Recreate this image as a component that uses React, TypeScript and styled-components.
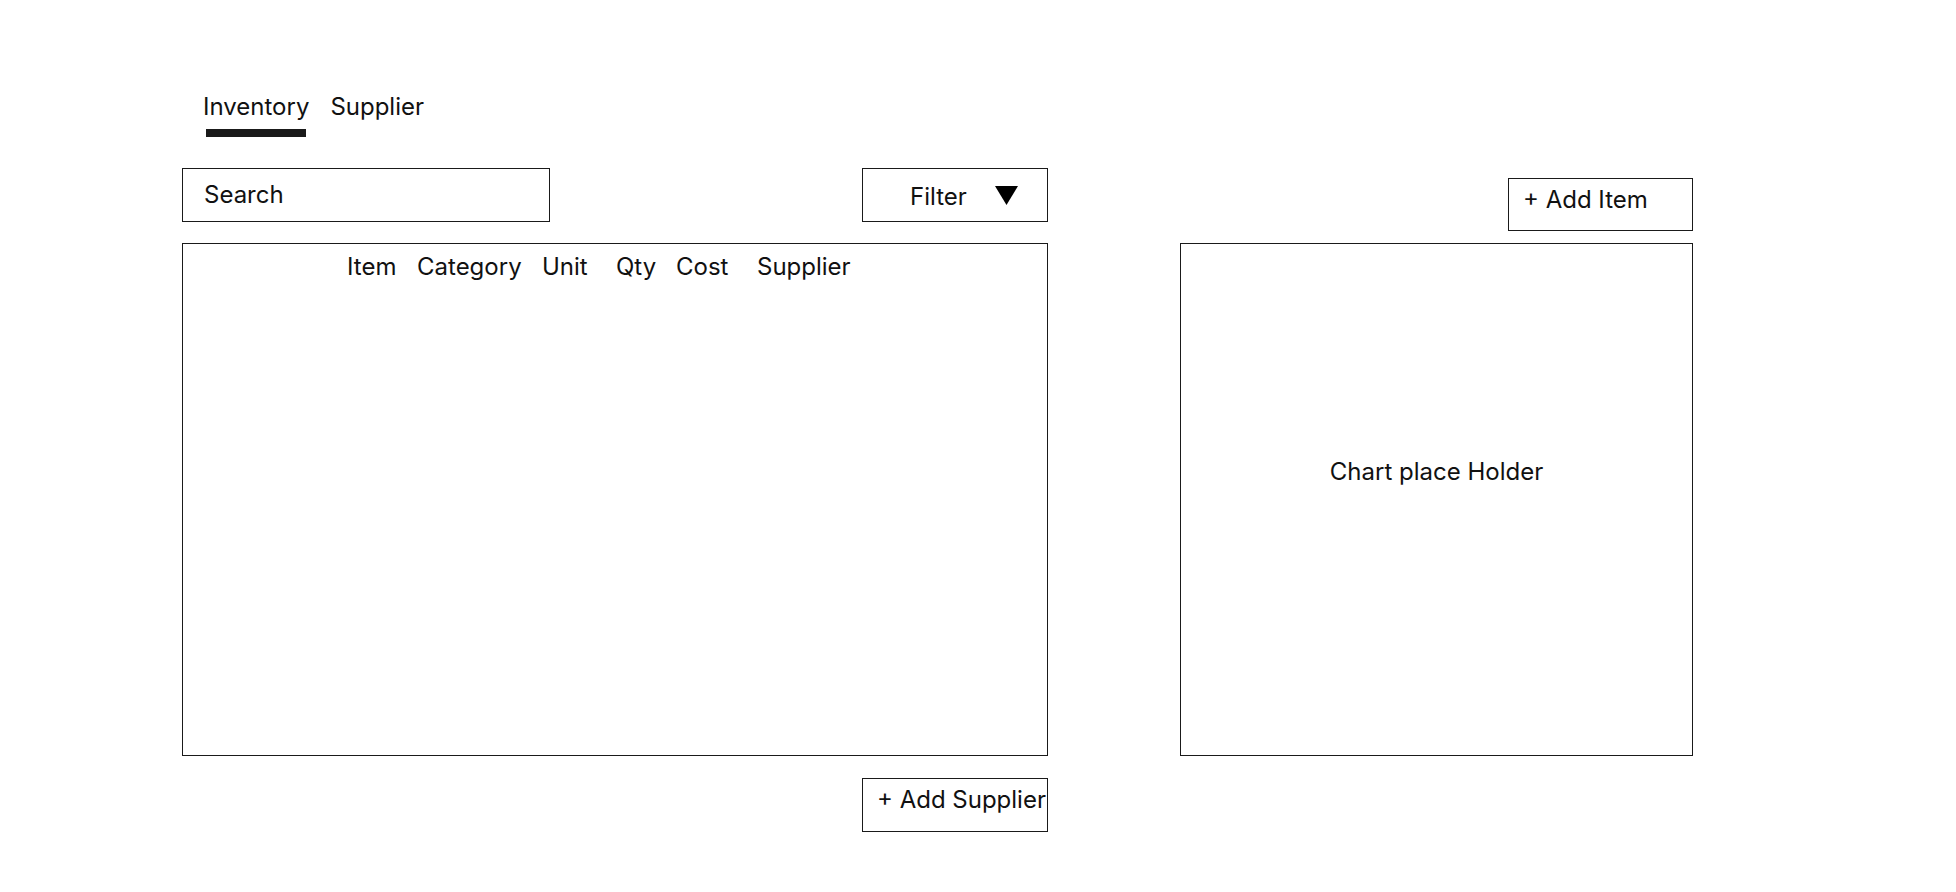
import React from 'react';
import styled, { createGlobalStyle } from 'styled-components';

const GlobalStyle = createGlobalStyle`
  html, body {
    margin: 0;
    padding: 0;
    background: #ffffff;
  }
  body {
    font-family: Inter, 'Noto Sans', sans-serif;
    color: #111111;
  }
`;

const Page = styled.div`
  display: flex;
  align-items: flex-start;
  gap: 132px;
  padding: 92px 0 0 182px;
  width: 1956px;
  height: 892px;
  box-sizing: border-box;
`;

const LeftColumn = styled.div`
  display: flex;
  flex-direction: column;
  width: 866px;
`;

const RightColumn = styled.div`
  display: flex;
  flex-direction: column;
  align-items: flex-end;
  width: 513px;
  padding-top: 86px;
  gap: 12px;
`;

const Tabs = styled.div`
  display: flex;
  gap: 21px;
  padding-left: 21px;
`;

const Tab = styled.div<{ $active?: boolean }>`
  display: flex;
  flex-direction: column;
  font-size: 24px;
  line-height: 29px;
  cursor: pointer;

  &::after {
    content: '';
    display: block;
    width: 100px;
    height: 8px;
    margin: 8px 0 0 3px;
    background: ${p => (p.$active ? '#1a1a1a' : 'transparent')};
  }
`;

const Toolbar = styled.div`
  display: flex;
  justify-content: space-between;
  margin-top: 31px;
`;

const SearchBox = styled.div`
  display: flex;
  align-items: center;
  width: 368px;
  height: 54px;
  box-sizing: border-box;
  border: 1px solid #1a1a1a;
  padding: 0 0 2px 21px;
  font-size: 24px;
  line-height: 29px;
`;

const FilterButton = styled.div`
  display: flex;
  align-items: center;
  gap: 28px;
  width: 186px;
  height: 54px;
  box-sizing: border-box;
  border: 1px solid #1a1a1a;
  padding: 3px 0 0 47px;
  font-size: 24px;
  line-height: 29px;

  svg {
    margin-top: -2px;
  }
`;

const Table = styled.div`
  margin-top: 21px;
  height: 513px;
  box-sizing: border-box;
  border: 1px solid #1a1a1a;
  padding: 8px 0 0 164px;
`;

const HeaderRow = styled.div`
  display: grid;
  grid-template-columns: 70px 125px 74px 60px 81px auto;
  font-size: 24px;
  line-height: 29px;
`;

const ActionButton = styled.div<{ $width: number; $height: number }>`
  width: ${p => p.$width}px;
  height: ${p => p.$height}px;
  box-sizing: border-box;
  border: 1px solid #1a1a1a;
  padding: 6px 0 0 14px;
  font-size: 24px;
  line-height: 29px;
  white-space: nowrap;
`;

const BottomBar = styled.div`
  display: flex;
  justify-content: flex-end;
  margin-top: 22px;
`;

const ChartBox = styled.div`
  display: flex;
  justify-content: center;
  align-items: flex-start;
  width: 513px;
  height: 513px;
  box-sizing: border-box;
  border: 1px solid #1a1a1a;
  padding-top: 213px;
  font-size: 24px;
  line-height: 29px;
`;

const columns = ['Item', 'Category', 'Unit', 'Qty', 'Cost', 'Supplier'];

const App: React.FC = () => {
  return (
    <>
      <GlobalStyle />
      <Page>
        <LeftColumn>
          <Tabs>
            <Tab $active>Inventory</Tab>
            <Tab>Supplier</Tab>
          </Tabs>
          <Toolbar>
            <SearchBox>Search</SearchBox>
            <FilterButton>
              <span>Filter</span>
              <svg width="23" height="19" viewBox="0 0 23 19">
                <polygon points="0,0 23,0 11.5,19" fill="#000" />
              </svg>
            </FilterButton>
          </Toolbar>
          <Table>
            <HeaderRow>
              {columns.map(col => (
                <span key={col}>{col}</span>
              ))}
            </HeaderRow>
          </Table>
          <BottomBar>
            <ActionButton $width={186} $height={54}>
              + Add Supplier
            </ActionButton>
          </BottomBar>
        </LeftColumn>
        <RightColumn>
          <ActionButton $width={185} $height={53}>
            + Add Item
          </ActionButton>
          <ChartBox>Chart place Holder</ChartBox>
        </RightColumn>
      </Page>
    </>
  );
};

export default App;
